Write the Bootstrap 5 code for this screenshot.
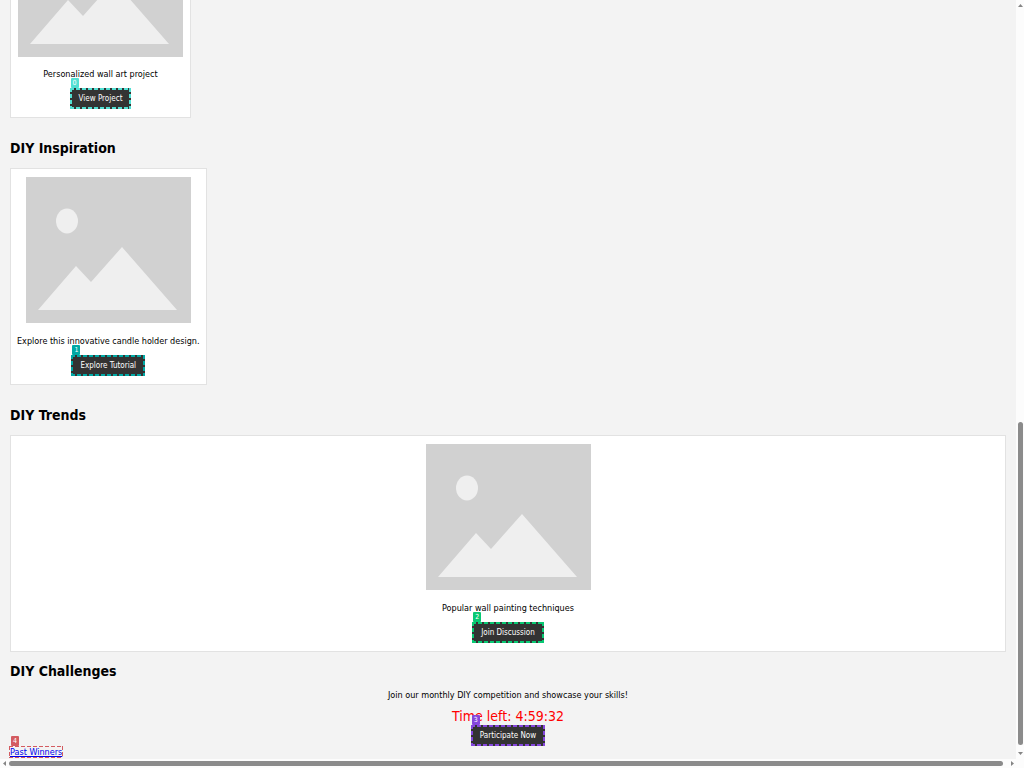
<!DOCTYPE html>
<html lang="en">
<head>
<meta charset="utf-8">
<meta name="viewport" content="width=device-width, initial-scale=1">
<title>DIY Projects</title>
<link href="https://cdn.jsdelivr.net/npm/bootstrap@5.3.0/dist/css/bootstrap.min.css" rel="stylesheet">
<style>
  body { font-family: "DejaVu Sans Condensed", "DejaVu Sans", sans-serif; font-size: 9px; line-height: 14px; color: #000; background: #f3f3f3; }
  .viewport { height: 100vh; }
  .content { margin: 0 10px 0 2px; }
  .block { margin-top: 20px; }
  .challenges { margin-top: 9px; }
  .section-title { font-size: 14px; line-height: 20px; font-weight: 700; margin: 0; }
  .block .section-title { margin-bottom: 10px; }
  .tile { background: #fff; border: 1px solid #e2e2e2; padding: 8px 7px; }
  .block .tile { padding: 8px 6px; }
  .first { border-top: 0; padding-top: 0; }
  .thumb { display: block; width: 165px; height: 146px; }
  .thumb-clip { height: 57px; overflow: hidden; display: flex; align-items: flex-end; }
  .thumb-clip .thumb { flex: none; }
  .tile-text { margin: 10px 0 7px; }
  .block .tile-text { margin-top: 11px; }
  .invite { margin: 7px 0 6px; }
  .act { background: #333; color: #fff; border: 0; border-radius: 0; padding: 0 9px; height: 21px; font-size: 8px; line-height: 20px; }
  .marked { position: relative; }
  .marked::after {
    content: ""; position: absolute; inset: 0; pointer-events: none;
    background:
      repeating-linear-gradient(90deg, var(--mark) 0 4px, transparent 4px 6px) 0 0 / 100% var(--w) no-repeat,
      repeating-linear-gradient(90deg, var(--mark) 0 4px, transparent 4px 6px) 0 100% / 100% var(--w) no-repeat,
      repeating-linear-gradient(var(--mark) 0 4px, transparent 4px 6px) 0 0 / var(--w) 100% no-repeat,
      repeating-linear-gradient(var(--mark) 0 4px, transparent 4px 6px) 100% 0 / var(--w) 100% no-repeat;
  }
  .tag { position: absolute; left: 1px; bottom: 100%; width: 8px; height: 10px; font-size: 7px; line-height: 10px; color: #fff; text-align: center; background: var(--mark); border-radius: 1px; }
  .m0 { --mark: #52dfd3; } .m1 { --mark: #00a9a5; } .m2 { --mark: #08c873; } .m3 { --mark: #8446dc; } .m4 { --mark: #d35b60; }
  .act { --w: 2px; }
  .timer { font-size: 14px; line-height: 17px; color: #f00; }
  .winners { --w: 1px; color: #00e; line-height: 12px; }
  .winners::after { inset: 0 -1px; }
  .scroll-y, .scroll-x { background: #fcfcfc; }
  .scroll-y { width: 8px; }
  .scroll-x { height: 9px; padding-left: 3px; gap: 3px; }
  .bar-y { width: 5px; height: 323px; border-radius: 3px; background: #8b8b8b; }
  .bar-x { height: 5px; border-radius: 3px; background: #8b8b8b; }
  .arrow { display: block; flex: none; fill: #858585; }
  .y-end { gap: 7px; }
  .x-end { margin: 0 10px 0 5px; }
</style>
</head>
<body>
<svg class="d-none" aria-hidden="true">
  <symbol id="placeholder" viewBox="0 0 165 146">
    <path fill="#d1d1d1" d="M0 0h165v146H0z"/>
    <ellipse cx="41" cy="44" rx="11" ry="12.5" fill="#efefef"/>
    <path fill="#efefef" d="M12 133 50 89 65 105 96 70 151 133z"/>
  </symbol>
</svg>
<div class="viewport d-flex flex-column overflow-hidden">
  <div class="d-flex flex-grow-1 overflow-hidden">
    <main class="flex-grow-1 ps-2 overflow-hidden">
      <div class="content">
        <section class="d-flex">
          <div class="tile first d-flex flex-column align-items-center">
            <div class="thumb-clip"><svg class="thumb" role="img" aria-label="Wall art"><use href="#placeholder"/></svg></div>
            <p class="tile-text">Personalized wall art project</p>
            <button type="button" class="act marked m0">View Project<span class="tag">0</span></button>
          </div>
        </section>
        <section class="block">
          <h2 class="section-title">DIY Inspiration</h2>
          <div class="d-flex">
            <div class="tile d-flex flex-column align-items-center">
              <svg class="thumb" role="img" aria-label="Candle holder"><use href="#placeholder"/></svg>
              <p class="tile-text">Explore this innovative candle holder design.</p>
              <button type="button" class="act marked m1">Explore Tutorial<span class="tag">1</span></button>
            </div>
          </div>
        </section>
        <section class="block">
          <h2 class="section-title">DIY Trends</h2>
          <div class="tile d-flex flex-column align-items-center">
            <svg class="thumb" role="img" aria-label="Wall painting"><use href="#placeholder"/></svg>
            <p class="tile-text">Popular wall painting techniques</p>
            <button type="button" class="act marked m2">Join Discussion<span class="tag">2</span></button>
          </div>
        </section>
        <section class="challenges">
          <h2 class="section-title">DIY Challenges</h2>
          <div class="d-flex flex-column align-items-center">
            <p class="invite">Join our monthly DIY competition and showcase your skills!</p>
            <div class="timer">Time left: 4:59:32</div>
            <button type="button" class="act marked m3">Participate Now<span class="tag">3</span></button>
          </div>
          <div class="d-flex"><a href="#" class="winners marked m4">Past Winners<span class="tag">4</span></a></div>
        </section>
      </div>
    </main>
    <div class="scroll-y d-flex flex-column align-items-center justify-content-between" aria-hidden="true">
      <svg class="arrow mt-1" width="5" height="3" viewBox="0 0 5 3"><path d="M0 3 2.500 0 5 3z"/></svg>
      <div class="y-end d-flex flex-column align-items-center"><div class="bar-y"></div>
      <svg class="arrow mb-1" width="5" height="3" viewBox="0 0 5 3"><path d="M0 0h5L2.500 3z"/></svg></div>
    </div>
  </div>
  <div class="scroll-x d-flex align-items-center" aria-hidden="true">
    <svg class="arrow" width="3" height="5" viewBox="0 0 3 5"><path d="M3 0v5L0 2.500z"/></svg>
    <div class="bar-x flex-grow-1"></div>
    <svg class="arrow x-end" width="3" height="5" viewBox="0 0 3 5"><path d="M0 0v5L3 2.500z"/></svg>
  </div>
</div>
<script src="https://cdn.jsdelivr.net/npm/bootstrap@5.3.0/dist/js/bootstrap.bundle.min.js"></script>
</body>
</html>
